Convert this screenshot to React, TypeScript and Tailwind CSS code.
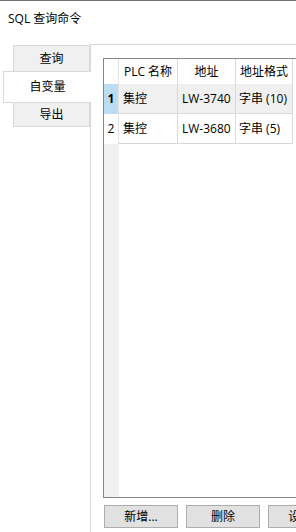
import React from 'react'

const rows = [
  { id: 1, plc: '集控', addr: 'LW-3740', fmt: '字串 (10)', selected: true },
  { id: 2, plc: '集控', addr: 'LW-3680', fmt: '字串 (5)', selected: false },
]

export default function App() {
  const font = { fontFamily: '"Open Sans", "Noto Sans CJK SC", sans-serif' }

  return (
    <div
      className="w-[296px] h-[532px] bg-white overflow-hidden flex flex-col border-t border-[#6e6e6e] text-[12px] text-black"
      style={font}
    >
      {/* Title */}
      <div className="h-[43px] pl-[8px] pt-[8px] leading-[20px] text-[12px]">SQL 查询命令</div>

      <div className="flex flex-1 min-h-0">
        {/* Tabs */}
        <div className="w-[90px] shrink-0 pt-px flex flex-col relative z-10">
          <div className="ml-[13px] h-[27px] bg-[#f0f0f0] border border-[#d9d9d9] flex items-center justify-center">
            查询
          </div>
          <div className="ml-[3px] -mr-px -mt-px h-[32px] bg-white border border-r-0 border-[#d9d9d9] flex items-center justify-center">
            自变量
          </div>
          <div className="ml-[13px] -mt-px h-[25px] bg-[#f0f0f0] border border-[#d9d9d9] flex items-center justify-center">
            导出
          </div>
        </div>

        {/* Panel */}
        <div className="flex-1 border-l border-t border-[#d9d9d9] pt-[13px] pl-[12px] flex flex-col min-w-0">
          {/* Grid */}
          <div className="h-[440px] border border-r-0 border-[#828790] flex flex-col overflow-hidden">
            {/* Header */}
            <div className="flex h-[25px] shrink-0">
              <div className="w-[15px] border-r border-[#e3e3e3] bg-white" />
              <div className="w-[59px] border-r border-[#d9d9d9] flex items-center justify-center whitespace-nowrap">PLC 名称</div>
              <div className="w-[58px] border-r border-[#d9d9d9] flex items-center justify-center">地址</div>
              <div className="w-[57px] border-r border-[#d9d9d9] flex items-center justify-center">地址格式</div>
            </div>
            {rows.map((r) => (
              <div key={r.id} className="flex h-[30px] shrink-0">
                <div
                  className={`w-[15px] border-r border-[#e3e3e3] flex items-center justify-center ${
                    r.selected ? 'bg-[#bcdcf4] font-bold' : 'bg-white'
                  }`}
                >
                  {r.id}
                </div>
                <div
                  className={`w-[59px] border-r border-b border-[#d9d9d9] flex items-center pl-[4px] ${
                    r.selected ? 'bg-[#f0f0f0]' : 'bg-white'
                  }`}
                >
                  {r.plc}
                </div>
                <div
                  className={`w-[58px] border-r border-b border-[#d9d9d9] flex items-center pl-[4px] whitespace-nowrap ${
                    r.selected ? 'bg-[#f0f0f0]' : 'bg-white'
                  }`}
                >
                  {r.addr}
                </div>
                <div
                  className={`w-[57px] border-r border-b border-[#d9d9d9] flex items-center pl-[3px] whitespace-nowrap ${
                    r.selected ? 'bg-[#f0f0f0]' : 'bg-white'
                  }`}
                >
                  {r.fmt}
                </div>
              </div>
            ))}
            <div className="flex flex-1">
              <div className="w-[15px] bg-[#f0f0f0]" />
            </div>
          </div>

          {/* Buttons */}
          <div className="flex gap-[8px] mt-[7px] pl-px">
            <button className="w-[74px] h-[23px] shrink-0 bg-[#e1e1e1] border border-[#adadad] text-[12px]">新增...</button>
            <button className="w-[74px] h-[23px] shrink-0 bg-[#e1e1e1] border border-[#adadad] text-[12px]">删除</button>
            <button className="w-[74px] h-[23px] shrink-0 bg-[#e1e1e1] border border-[#adadad] text-[12px]">设置...</button>
          </div>
        </div>
      </div>
    </div>
  )
}
